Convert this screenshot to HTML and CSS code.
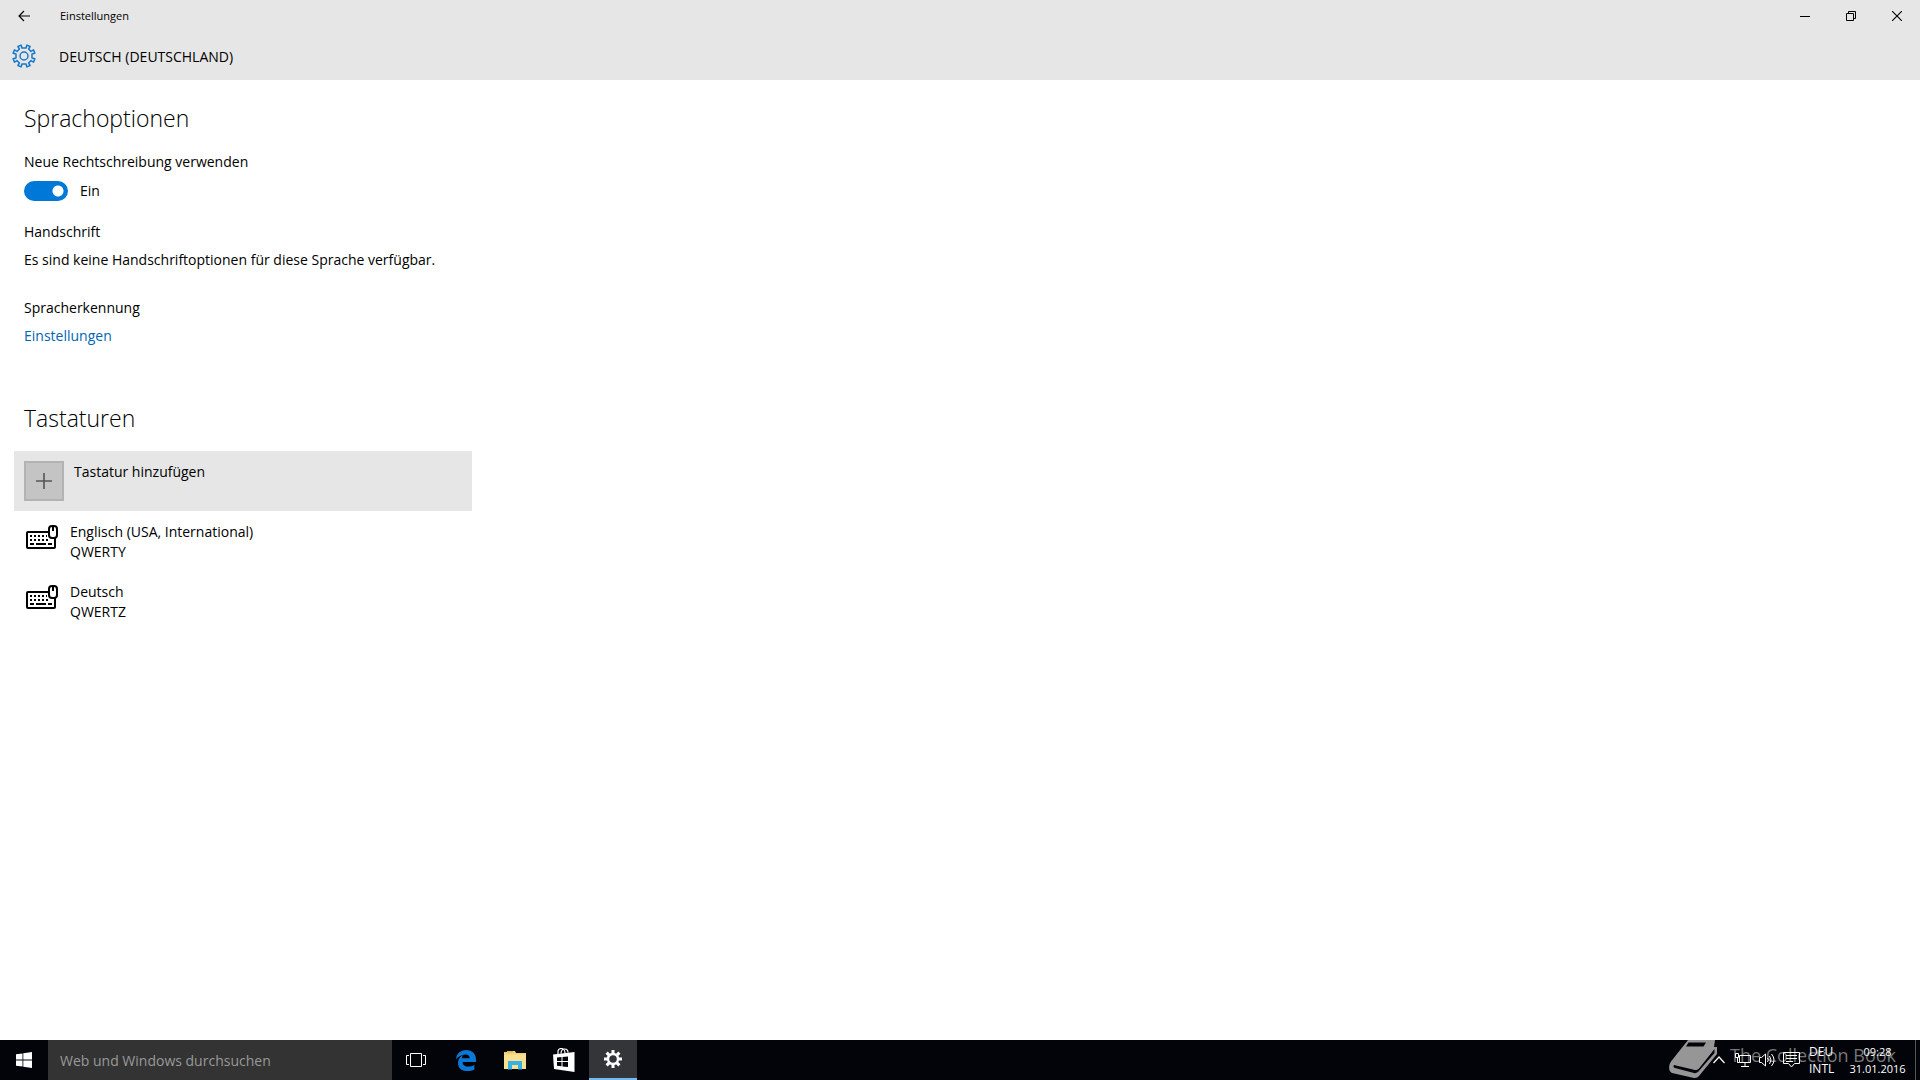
FILE: index.html
```html
<!DOCTYPE html>
<html lang="de">
<head>
<meta charset="utf-8">
<title>Einstellungen</title>
<link rel="stylesheet" href="styles.css">
</head>
<body>
<header class="window-head">
  <div class="titlebar">
    <button class="back" aria-label="Zurück"><svg width="14" height="14" viewBox="0 0 14 14"><path d="M13 7H2M7 2L2 7l5 5" fill="none" stroke="#000" stroke-width="1.2"/></svg></button>
    <span class="app-name">Einstellungen</span>
    <div class="window-buttons">
      <button aria-label="Minimieren"><svg width="10" height="10" viewBox="0 0 10 10"><path d="M0 5.500h10" stroke="#000"/></svg></button>
      <button aria-label="Verkleinern"><svg width="10" height="10" viewBox="0 0 10 10"><path d="M.5 2.500h7v7h-7zM2.500 2.500v-2h7v7h-2" fill="none" stroke="#000"/></svg></button>
      <button aria-label="Schließen"><svg width="10" height="10" viewBox="0 0 10 10"><path d="M0 0l10 10M10 0L0 10" stroke="#000" stroke-width="1.1"/></svg></button>
    </div>
  </div>
  <div class="page-title">
    <svg class="gear" width="24" height="24" viewBox="0 0 24 24" fill="none" stroke="#1979ca" stroke-width="1.5" stroke-linejoin="round"><path d="M9.900 4L9.200 1.100l-3.300 1.400L7.400 5 5 7.400 2.500 5.900 1.100 9.200 4 9.900v4.200l-2.900.7 1.400 3.300L5 16.600 7.400 19l-1.500 2.500 3.300 1.400.7-2.900h4.200l.7 2.900 3.300-1.400-1.500-2.500 2.400-2.400 2.500 1.500 1.400-3.300-2.900-.7V9.900l2.900-.7-1.400-3.300L19 7.400 16.600 5l1.500-2.500-3.300-1.400-.7 2.900z"/><circle cx="12" cy="12" r="4"/></svg>
    <h1>DEUTSCH (DEUTSCHLAND)</h1>
  </div>
</header>
<main class="content">
  <section>
    <h2>Sprachoptionen</h2>
    <label class="label" for="spelling">Neue Rechtschreibung verwenden</label>
    <div class="toggle-row"><input class="toggle" id="spelling" type="checkbox" role="switch" checked><span>Ein</span></div>
    <h3 class="label">Handschrift</h3>
    <p class="note">Es sind keine Handschriftoptionen für diese Sprache verfügbar.</p>
    <h3 class="label">Spracherkennung</h3>
    <a class="link" href="#">Einstellungen</a>
  </section>
  <section class="keyboards">
    <h2>Tastaturen</h2>
    <button class="row add"><span class="plus"><svg width="16" height="16" viewBox="0 0 16 16"><path d="M0 8h16M8 0v16" stroke="#555" stroke-width="1.600"/></svg></span><span>Tastatur hinzufügen</span></button>
    <button class="row"><svg class="kb" width="32" height="24" viewBox="0 0 32 24"><use href="#keyboard"/></svg><span>Englisch (USA, International)<br>QWERTY</span></button>
    <button class="row"><svg class="kb" width="32" height="24" viewBox="0 0 32 24"><use href="#keyboard"/></svg><span>Deutsch<br>QWERTZ</span></button>
  </section>
</main>
<footer class="taskbar">
  <button class="start" aria-label="Start"><svg width="16" height="16" viewBox="0 0 16 16" fill="#fff"><path d="M0 2.300L6.500 1.400v6.100H0zM7.300 1.300L16 0v7.500H7.300zM0 8.400h6.500v6.200L0 13.700zM7.300 8.400H16V16l-8.700-1.300z"/></svg></button>
  <input class="search" type="text" placeholder="Web und Windows durchsuchen" aria-label="Web und Windows durchsuchen">
  <button aria-label="Taskansicht"><svg width="20" height="14" viewBox="0 0 20 14" fill="none" stroke="#fff"><path d="M4.500.5h11v13h-11zM3 2.500H.5v9H3M17 2.500h2.500v9H17"/></svg></button>
  <div class="apps">
    <button aria-label="Edge"><svg width="20" height="21" viewBox="0 0 20 21"><path d="M0 9.200C.6 3.500 4.600 0 10.200 0 16.500 0 20 4.300 20 9.600v2.300H6.600c.2 3.300 2.700 4.700 5.800 4.700 2.300 0 4.200-.6 6-1.700v4.500c-2 1.100-4.500 1.600-7 1.600-5.700 0-9.400-3-9.400-8.100 0-3.300 1.800-6.100 5-7.600-.7.800-1.100 1.800-1.200 2.900h7.900c0-2.400-1.400-3.800-4.100-3.800-4.100 0-7.500 2.200-9.600 4.800z" fill="#0a78d7"/></svg></button>
    <button aria-label="Explorer"><svg width="22" height="19" viewBox="0 0 22 19"><path d="M0 1h3V0h8l1 2h10v16H0z" fill="#f0d27a"/><path d="M0 3.500h22V18H0z" fill="#f8df91"/><path d="M4 10h14v8.500h-4V14H8v4.500H4z" fill="#35b3e3"/><path d="M3 .8h6" stroke="#dfa61f"/></svg></button>
    <button aria-label="Store"><svg width="22" height="24" viewBox="0 0 22 24"><path d="M0 6.500L21.500 4v20L1 21z" fill="#fff"/><path d="M5 6V4c0-3 2-3.500 3.500-3.500S12 2 12 5M8 5.500C8 2 10 1 11.500 1S15 2 15 4.500" fill="none" stroke="#fff" stroke-width="1.200"/><path d="M4 9.500l4.500-.5v4H4zM9.500 9l5.500-.6V13H9.500zM4 14h4.500v4.200L4 17.700zM9.500 14H15v5l-5.500-.6z" fill="#02040a"/></svg></button>
    <button class="active" aria-label="Einstellungen"><svg width="18" height="18" viewBox="0 0 18 18" stroke="#fff"><circle cx="9" cy="9" r="5" fill="none" stroke-width="2.400"/><path d="M9 0v3.500M9 14.500V18M0 9h3.500M14.500 9H18M2.600 2.600l2.500 2.500M12.900 12.900l2.500 2.500M15.400 2.600l-2.500 2.500M5.100 12.900l-2.500 2.500" stroke-width="3"/></svg></button>
  </div>
  <div class="watermark">
    <svg width="50" height="40" viewBox="0 0 50 40"><path d="M20 0H47L46 7 49 7V14L31 36Q29 38.500 26 38L4 33C0 31 0 24 5 19z" fill="#969696"/><path d="M20.500 2.500H38l-2.500 4H18z" fill="#02040a"/><path d="M6 25L27 30Q29 30.500 31 28.500L46.500 9V13L30 32Q28 33.500 26 33L7 28Q4.500 27 6 25z" fill="#02040a"/></svg>
    <span>The Collection Book</span>
  </div>
  <div class="tray">
    <button aria-label="Ausgeblendete Symbole"><svg width="12" height="8" viewBox="0 0 12 8"><path d="M.5 7L6 1l5.500 6" fill="none" stroke="#fff" stroke-width="1.200"/></svg></button>
    <button aria-label="Netzwerk"><svg width="16" height="14" viewBox="0 0 16 14" fill="none" stroke="#fff"><path d="M4.500 2.500h11v7h-11zM10 9.500v4M6 13.500h8M.5.500h3v4h-3zM2.500 4.500v5h2"/></svg></button>
    <button aria-label="Lautstärke"><svg width="16" height="14" viewBox="0 0 16 14" fill="none" stroke="#fff"><path d="M.5 4.500h2L6.500 1v12L2.500 9.500h-2zM8.500 5q1.500 2 0 4M10.500 3q3 4 0 8M12.500 1q5 6 0 12"/></svg></button>
    <button aria-label="Info-Center"><svg width="17" height="16" viewBox="0 0 17 16" fill="none" stroke="#fff"><path d="M.5.500h16v11h-5l-3 3.500-3-3.500h-5zM3 3.500h11M3 6.500h11M3 9.500h7"/></svg></button>
    <button class="lang">DEU<br>INTL</button>
    <button class="clock">09:28<br>31.01.2016</button>
    <button class="desktop" aria-label="Desktop anzeigen"></button>
  </div>
</footer>
<svg class="defs" width="0" height="0"><symbol id="keyboard" viewBox="0 0 32 24"><rect x="1" y="7" width="28" height="16" rx="1" fill="none" stroke="#000" stroke-width="2"/><path d="M4 11h17M4 15h20" stroke="#000" stroke-width="2" stroke-dasharray="2 2"/><path d="M4 19h4M10 19h10M22 19h4" stroke="#000" stroke-width="2"/><rect x="23" y="1" width="8" height="12" rx="3" fill="#fff" stroke="#000" stroke-width="2"/><path d="M27 1v5" stroke="#000" stroke-width="2"/></symbol></svg>
</body>
</html>
```

FILE: styles.css
```css
* { box-sizing: border-box; }
body {
  margin: 0;
  min-height: 100vh;
  display: flex;
  flex-direction: column;
  background: #fff;
  color: #000;
  font: 14px/20px "Open Sans", "Noto Sans", sans-serif;
}
button { border: 0; padding: 0; background: none; font: inherit; color: inherit; }
h1, h2, h3, p { margin: 0; font-weight: 400; font-size: inherit; }
svg { display: block; flex: none; }
.window-head { background: #e6e6e6; height: 80px; }
.titlebar { display: flex; height: 32px; align-items: center; }
.titlebar button { display: flex; align-items: center; justify-content: center; height: 32px; }
.back { width: 48px; }
.app-name { padding-left: 12px; font-size: 11px; }
.window-buttons { display: flex; margin-left: auto; }
.window-buttons button { width: 46px; }
.page-title { display: flex; align-items: center; height: 48px; padding: 0 12px; gap: 23px; }
.page-title h1 { padding-top: 2px; }
.content { flex: 1; padding: 23px 24px 0; }
h2 { font-size: 23px; line-height: 30px; font-weight: 300; margin-bottom: 19px; }
.label { display: block; }
.toggle-row { display: flex; align-items: center; gap: 12px; margin: 9px 0 21px; height: 20px; }
.toggle {
  appearance: none;
  width: 44px;
  height: 20px;
  margin: 0;
  border-radius: 10px;
  background: radial-gradient(circle at 34px 10px, #fff 5px, #0078d7 6px);
}
.note { margin: 8px 0 28px; }
.link { display: block; width: max-content; margin-top: 8px; color: #0066b4; text-decoration: none; }
.keyboards { margin: 57px 0 0 -10px; }
.keyboards h2 { padding-left: 10px; margin-bottom: 18px; }
.row { display: flex; align-items: flex-start; gap: 12px; width: 458px; height: 60px; padding: 10px; text-align: left; }
.row span:last-child { padding-top: 1px; }
.add { background: #e6e6e6; gap: 10px; }
.plus { width: 40px; height: 40px; border: 2px solid #b3b3b3; background: #c4c4c4; display: flex; align-items: center; justify-content: center; }
.kb { margin: 4px 0 0 2px; }
.taskbar { display: flex; height: 40px; background: #02040a; color: #fff; position: relative; isolation: isolate; }
.taskbar button { display: flex; align-items: center; justify-content: center; width: 48px; height: 40px; flex: none; }
.search { width: 344px; border: 0; padding: 2px 12px 0; background: #333; color: #fff; font: 14px/20px "Open Sans", "Noto Sans", sans-serif; }
.search::placeholder { color: #999; opacity: 1; }
.apps { display: flex; gap: 1px; margin-left: 2px; }
.taskbar .active { background: #333539; border-bottom: 2px solid #76b9ed; }
.tray { display: flex; margin-left: auto; }
.taskbar .tray button { width: 24px; }
.taskbar .tray .lang { width: 37px; padding-left: 6px; justify-content: flex-start; font-size: 12px; line-height: 17px; text-align: left; }
.taskbar .tray .clock { width: 75px; font-size: 11px; line-height: 17px; }
.taskbar .tray .desktop { width: 5px; border-left: 1px solid #555; }
.watermark {
  position: absolute;
  z-index: -1;
  right: 24px;
  top: 0;
  display: flex;
  gap: 12px;
  color: #777;
  font-size: 18px;
  line-height: 30px;
  pointer-events: none;
}
.defs { position: absolute; }
```
